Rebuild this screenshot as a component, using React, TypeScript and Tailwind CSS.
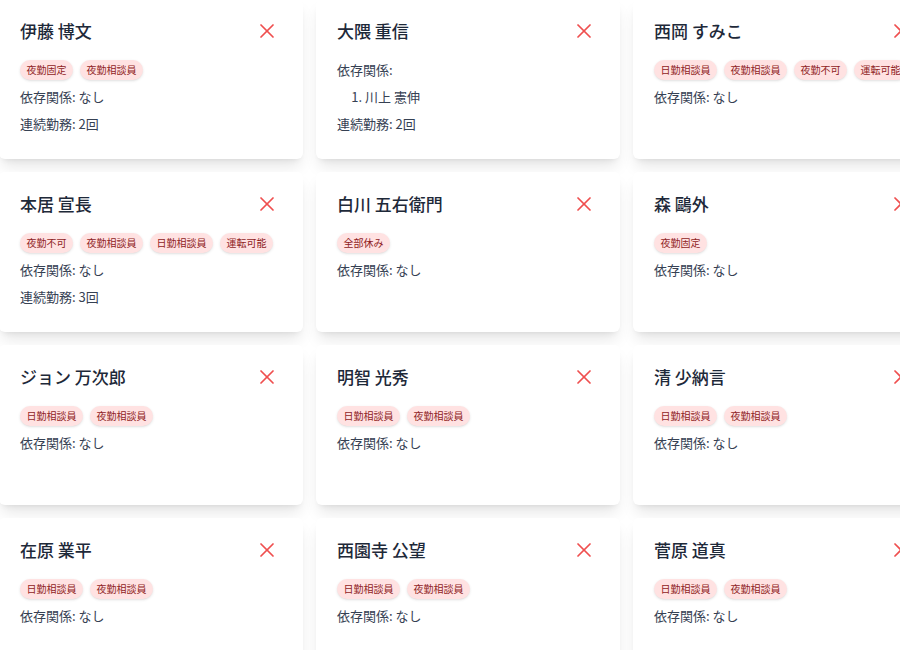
import React from "react";
import { X } from "lucide-react";

type Person = {
  name: string;
  tags: string[];
  deps: string[];
  streak?: number;
};

const people: Person[] = [
  { name: "伊藤 博文", tags: ["夜勤固定", "夜勤相談員"], deps: [], streak: 2 },
  { name: "大隈 重信", tags: [], deps: ["川上 憲伸"], streak: 2 },
  { name: "西岡 すみこ", tags: ["日勤相談員", "夜勤相談員", "夜勤不可", "運転可能"], deps: [] },
  { name: "本居 宣長", tags: ["夜勤不可", "夜勤相談員", "日勤相談員", "運転可能"], deps: [], streak: 3 },
  { name: "白川 五右衛門", tags: ["全部休み"], deps: [] },
  { name: "森 鷗外", tags: ["夜勤固定"], deps: [] },
  { name: "ジョン 万次郎", tags: ["日勤相談員", "夜勤相談員"], deps: [] },
  { name: "明智 光秀", tags: ["日勤相談員", "夜勤相談員"], deps: [] },
  { name: "清 少納言", tags: ["日勤相談員", "夜勤相談員"], deps: [] },
  { name: "在原 業平", tags: ["日勤相談員", "夜勤相談員"], deps: [] },
  { name: "西園寺 公望", tags: ["日勤相談員", "夜勤相談員"], deps: [] },
  { name: "菅原 道真", tags: ["日勤相談員", "夜勤相談員"], deps: [] },
];

function Card({ p }: { p: Person }) {
  return (
    <div className="h-[160px] rounded-md bg-white pt-5 pr-5 pl-[21px] shadow-lg">
      <div className="flex h-6 items-center justify-between">
        <span className="text-[17px] leading-6 font-medium text-gray-800">{p.name}</span>
        <button className="mr-1 text-[#ef4f4f]">
          <X size={24} strokeWidth={1.75} />
        </button>
      </div>
      <div className="mt-[17px] flex flex-col gap-[7px] text-[13px] leading-5 text-gray-700">
        {p.tags.length > 0 && (
          <div className="flex flex-wrap gap-[7px]">
            {p.tags.map((t) => (
              <span
                key={t}
                className="h-5 rounded-full bg-red-100 px-[6.5px] text-[10px] leading-5 text-[#8f1d1d] shadow-sm"
              >
                {t}
              </span>
            ))}
          </div>
        )}
        {p.deps.length === 0 ? (
          <div>依存関係: なし</div>
        ) : (
          <>
            <div>依存関係:</div>
            <ol className="list-decimal pl-7">
              {p.deps.map((d) => (
                <li key={d}>{d}</li>
              ))}
            </ol>
          </>
        )}
        {p.streak !== undefined && <div>連続勤務: {p.streak}回</div>}
      </div>
    </div>
  );
}

export default function App() {
  return (
    <div className="h-[650px] w-[900px] overflow-hidden bg-white font-['Noto_Sans_CJK_JP',sans-serif]">
      <div className="-mt-px -ml-px grid w-[938px] grid-cols-[repeat(3,304px)] gap-[13px]">
        {people.map((p) => (
          <Card key={p.name} p={p} />
        ))}
      </div>
    </div>
  );
}
